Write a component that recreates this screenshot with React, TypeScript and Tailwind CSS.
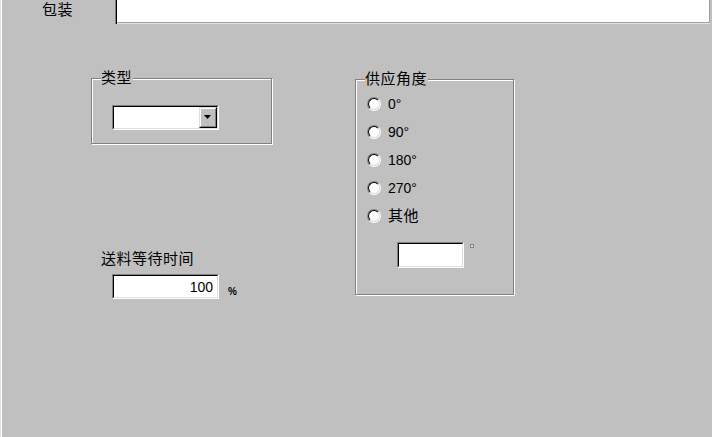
import React from "react";

const FONT = { fontFamily: '"Liberation Sans", "Noto Sans CJK SC", sans-serif' };

function Radio({ label, cjk }: { label: string; cjk?: boolean }) {
  return (
    <div className="h-[28px] flex items-center">
      <div className="ml-[11px] w-[14px] h-[14px] rounded-full border border-t-[#808080] border-l-[#808080] border-b-white border-r-white">
        <div className="w-full h-full rounded-full border border-t-black border-l-black border-b-[#dfdfdf] border-r-[#dfdfdf] bg-white" />
      </div>
      <span className={"ml-[7px] leading-[16px] text-black " + (cjk ? "text-[15px] tracking-[0.5px]" : "text-[14px]")}>
        {label}
      </span>
    </div>
  );
}

function Sunken({ className, children }: { className: string; children?: React.ReactNode }) {
  return (
    <div className={"border border-t-[#808080] border-l-[#808080] border-b-white border-r-white " + className}>
      <div className="w-full h-full border border-t-black border-l-black border-b-[#dfdfdf] border-r-[#dfdfdf] bg-white flex">
        {children}
      </div>
    </div>
  );
}

export default function App() {
  return (
    <div
      style={FONT}
      className="w-[713px] h-[437px] bg-[#c0c0c0] flex flex-col overflow-hidden shadow-[inset_1px_0_0_#dfdfdf,inset_2px_0_0_#fff,inset_-1px_0_0_#fff]"
    >
      {/* top strip */}
      <div className="flex h-[24px] shrink-0">
        <div className="w-[115px] flex items-start justify-center pt-[2px] text-[15px] leading-[16px] tracking-[0.5px] text-black">
          包装
        </div>
        <div className="w-[1px] bg-[#808080]" />
        <div className="w-[1px] bg-black" />
        <div className="flex-1 mr-[3px] flex flex-col">
          <div className="h-[23px] bg-white border-b border-r border-[#a0a0a0]" />
          <div className="h-[1px] bg-[#e4e4e4]" />
        </div>
      </div>

      {/* content */}
      <div className="flex">
        {/* left column */}
        <div className="ml-[91px] mt-[54px] flex flex-col">
          <div className="relative w-[181px] h-[66px] border border-[#808080] shadow-[inset_1px_1px_0_#fff,1px_1px_0_#fff]">
            <span className="absolute left-[9px] -top-[9px] bg-[#c0c0c0] pr-[1px] text-[15px] leading-[16px] tracking-[0.5px] text-black">
              类型
            </span>
            <div className="ml-[20px] mt-[26px]">
              <Sunken className="w-[107px] h-[25px]">
                <div className="flex-1" />
                <div className="w-[18px] h-full border border-t-[#dfdfdf] border-l-[#dfdfdf] border-b-black border-r-black">
                  <div className="w-full h-full border border-t-white border-l-white border-b-[#808080] border-r-[#808080] bg-[#c0c0c0] flex items-center justify-center">
                    <svg width="8" height="5" viewBox="0 0 8 5">
                      <path d="M0 0H7L3.5 4Z" fill="#000" />
                    </svg>
                  </div>
                </div>
              </Sunken>
            </div>
          </div>

          <div className="mt-[107px] ml-[10px] text-[15px] leading-[16px] tracking-[0.5px] text-black">
            送料等待时间
          </div>
          <div className="mt-[7px] ml-[21px] flex items-end">
            <Sunken className="w-[107px] h-[25px]">
              <div className="flex-1 flex items-center justify-end pr-[4px] text-[14px] leading-[16px] text-black">
                100
              </div>
            </Sunken>
            <span className="ml-[9px] mb-[2px] text-[10px] leading-[10px] font-bold text-black">%</span>
          </div>
        </div>

        {/* right group */}
        <div className="ml-[83px] mt-[55px] relative w-[159px] h-[216px] border border-[#808080] shadow-[inset_1px_1px_0_#fff,1px_1px_0_#fff]">
          <span className="absolute left-[9px] -top-[9px] bg-[#c0c0c0] pr-[1px] text-[15px] leading-[16px] tracking-[0.5px] text-black">
            供应角度
          </span>
          <div className="pt-[10px] flex flex-col">
            <Radio label="0°" />
            <Radio label="90°" />
            <Radio label="180°" />
            <Radio label="270°" />
            <Radio label="其他" cjk />
            <div className="mt-[12px] ml-[41px] flex items-start">
              <Sunken className="w-[67px] h-[26px]" />
              <div className="ml-[6px] mt-[2px] w-[4px] h-[4px] border border-[#808080] bg-[#e0e0e0]" />
            </div>
          </div>
        </div>
      </div>
    </div>
  );
}
